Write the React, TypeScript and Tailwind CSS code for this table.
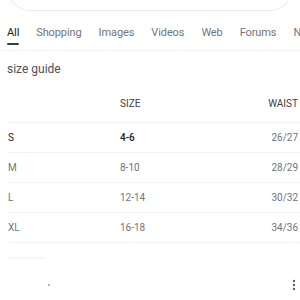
const tabs = ["All", "Shopping", "Images", "Videos", "Web", "Forums", "News"];

const rows = [
  { label: "S", size: "4-6", waist: "26/27", active: true },
  { label: "M", size: "8-10", waist: "28/29" },
  { label: "L", size: "12-14", waist: "30/32" },
  { label: "XL", size: "16-18", waist: "34/36" },
];

export default function App() {
  return (
    <div className="w-[300px] h-[300px] overflow-hidden bg-white font-['Roboto',sans-serif]">
      {/* search box edge */}
      <div className="mx-[8px] h-[10px] -mt-[30px] pt-[30px] box-content rounded-b-[22px] border border-t-0 border-[#e8eaed]" />

      {/* tabs */}
      <div className="flex gap-[17px] pl-[7px] mt-[15px] border-b border-[#f1f3f4] whitespace-nowrap">
        {tabs.map((t, i) => (
          <div key={t} className="flex flex-col shrink-0">
            <span className={`text-[11px] leading-[14px] tracking-[-0.1px] ${i === 0 ? "text-[#202124]" : "text-[#70757a]"}`}>{t}</span>
            <div className={`mt-[3px] mb-[5px] h-[2px] rounded-full ${i === 0 ? "bg-[#3c4043]" : "bg-transparent"}`} />
          </div>
        ))}
      </div>

      <div className="pl-[7px] pt-[10px] text-[12px] leading-[16px] text-[#4d5156]">size guide</div>

      {/* table */}
      <div className="ml-[8px] mt-[8px] text-[10px]">
        <div className="flex items-center h-[38px] border-b border-[#f1f3f4] text-[#3c4043]">
          <div className="w-[112px]" />
          <div className="flex-1">SIZE</div>
          <div className="pr-[2px]">WAIST</div>
        </div>
        {rows.map((r) => (
          <div key={r.label} className="flex items-center h-[30px] border-b border-[#f1f3f4]">
            <div className={`w-[112px] ${r.active ? "text-[#202124]" : "text-[#70757a]"}`}>{r.label}</div>
            <div className={`flex-1 ${r.active ? "text-[#202124] font-medium" : "text-[#70757a]"}`}>{r.size}</div>
            <div className="pr-[2px] text-[#70757a]">{r.waist}</div>
          </div>
        ))}
      </div>

      <div className="ml-[7px] mt-[14px] w-[38px] h-[2px] bg-[#f6f7f8]" />

      <div className="flex items-center justify-between pl-[48px] pr-[4px] mt-[20px]">
        <span className="w-[2px] h-[2px] rounded-full bg-[#9aa0a6]" />
        <svg width="4" height="12" viewBox="0 0 4 12">
          <circle cx="2" cy="2" r="1.2" fill="#5f6368" />
          <circle cx="2" cy="6" r="1.2" fill="#5f6368" />
          <circle cx="2" cy="10" r="1.2" fill="#5f6368" />
        </svg>
      </div>
    </div>
  );
}
